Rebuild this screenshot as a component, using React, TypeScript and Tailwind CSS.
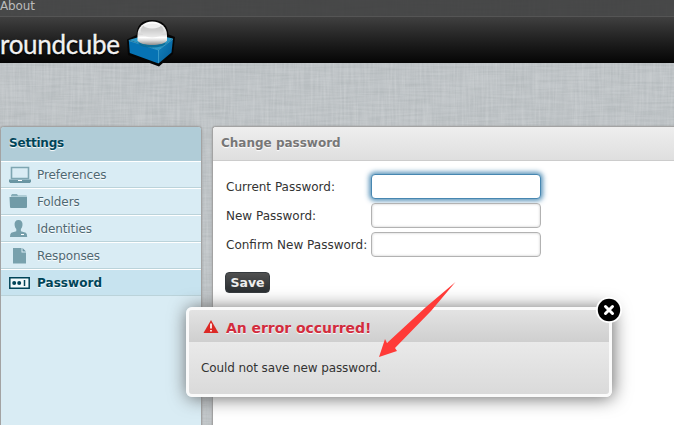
import React from "react";

type Item = { label: string; icon: React.ReactNode; active?: boolean };

const items: Item[] = [
  {
    label: "Preferences",
    icon: (
      <svg width="22" height="18" viewBox="0 0 22 18">
        <path d="M2.5 1.5h17v11h-17z" fill="#d9ecf4" stroke="#7ea6b2" strokeWidth="1.6" />
        <path d="M0 13.5h22v2l-1 1.5H1l-1-1.5z" fill="#6a96a3" />
        <path d="M9 14h4v1H9z" fill="#fff" />
      </svg>
    ),
  },
  {
    label: "Folders",
    icon: (
      <svg width="22" height="18" viewBox="0 0 22 18">
        <path d="M2 2.500L3 1h5l1 1.500h8q1 0 1 1H2z" fill="#86adb8" />
        <path d="M.5 4H18V14q0 1-1 1H2q-1 0-1-1z" fill="#719ba7" />
      </svg>
    ),
  },
  {
    label: "Identities",
    icon: (
      <svg width="22" height="18" viewBox="0 0 22 18">
        <path d="M9.500 0c3 0 4.300 2 4 5-.2 2-.8 3.200-1.600 4v2.200l5 1.500q1.300.8 1.300 4.300H1q0-3.500 1.300-4.300l5-1.500V9c-.8-.8-1.500-2-1.700-4-.3-3 1-5 3.900-5z" fill="#769fab" />
        <path d="M12 14.500h3" stroke="#fff" />
      </svg>
    ),
  },
  {
    label: "Responses",
    icon: (
      <svg width="22" height="18" viewBox="0 0 22 18">
        <path d="M4 1h8.500v4.500H17V16.500H4z" fill="#78a1ad" />
        <path d="M13.500 1L17 4.500h-3.500z" fill="#6b96a3" />
      </svg>
    ),
  },
  {
    label: "Password",
    active: true,
    icon: (
      <svg width="22" height="18" viewBox="0 0 22 18">
        <path d="M.8 3.700h19.400v10.600H.8z" fill="#f2fafc" stroke="#004458" strokeWidth="1.500" />
        <circle cx="5.200" cy="9" r="2" fill="#004458" />
        <circle cx="10.200" cy="9" r="2" fill="#004458" />
        <path d="M15.500 6v6" stroke="#004458" strokeWidth="1.500" />
      </svg>
    ),
  },
];

const fields = ["Current Password:", "New Password:", "Confirm New Password:"];

function Linen() {
  return (
    <svg width="674" height="425" className="absolute inset-0">
      <filter id="weft" x="0" y="0" width="100%" height="100%" colorInterpolationFilters="sRGB">
        <feTurbulence type="fractalNoise" baseFrequency=".03 .45" numOctaves="2" seed="4" />
        <feColorMatrix values="0 0 0 0 .25  0 0 0 0 .3  0 0 0 0 .3  1.2 0 0 0 -.4" />
      </filter>
      <filter id="warp" x="0" y="0" width="100%" height="100%" colorInterpolationFilters="sRGB">
        <feTurbulence type="fractalNoise" baseFrequency=".45 .03" numOctaves="2" seed="9" />
        <feColorMatrix values="0 0 0 0 1  0 0 0 0 1  0 0 0 0 1  1.2 0 0 0 -.4" />
      </filter>
      <rect width="674" height="425" filter="url(#weft)" opacity=".13" />
      <rect width="674" height="425" filter="url(#warp)" opacity=".24" />
      <rect width="674" height="16" fill="#333" opacity=".86" />
    </svg>
  );
}

function CubeLogo() {
  return (
    <svg width="52" height="48" viewBox="0 0 52 48" className="block">
      <defs>
        <linearGradient id="ball" x1="0" y1="0" x2="0" y2="1">
          <stop offset="0" stopColor="#fff" />
          <stop offset=".55" stopColor="#d8d8d8" />
          <stop offset=".68" stopColor="#fff" />
          <stop offset=".8" stopColor="#ddd" />
          <stop offset="1" stopColor="#8c8c8c" />
        </linearGradient>
        <linearGradient id="bowl" x1="0" y1="0" x2="0" y2="1">
          <stop offset="0" stopColor="#c5c5c5" />
          <stop offset=".5" stopColor="#d0d0d0" />
          <stop offset="1" stopColor="#ececec" />
        </linearGradient>
        <linearGradient id="side" x1="0" y1="0" x2="1" y2="1">
          <stop offset="0" stopColor="#1683bd" />
          <stop offset="1" stopColor="#005b98" />
        </linearGradient>
      </defs>
      <path d="M0 19.500L9.500 15Q10 0 25 0Q40 0 41.500 14.500L48 17L46 34L32 46.500L1 35Z" fill="#050505" />
      <path d="M1.800 20L12 17H39L46 18.500L31.500 30Z" fill="#2b97c6" />
      <path d="M1.800 20.500L31.500 30V43.500L2.800 33Z" fill="#0673b4" />
      <path d="M31.500 30L46 19L44.500 32.500L31.500 43.500Z" fill="url(#side)" />
      <path d="M1.800 20.500L31.500 30L46 19M31.500 30V43" stroke="#45abd8" strokeWidth=".8" fill="none" />
      <ellipse cx="25" cy="23" rx="13.500" ry="4.500" fill="#066790" opacity=".8" />
      <path d="M10.500 15C10.500 7 17 1.500 25.200 1.500S40 7 40 15v5.500c-3 6-26.500 6-29.500 0z" fill="url(#ball)" />
      <ellipse cx="25.200" cy="10.500" rx="11.500" ry="7" fill="url(#bowl)" />
      <ellipse cx="25.200" cy="5.500" rx="8.500" ry="3" fill="#fff" opacity=".7" />
    </svg>
  );
}

export default function App() {
  return (
    <div className="relative h-[425px] w-[674px] overflow-hidden bg-[#bfc4c7] text-[12px] text-[#333] [font-family:'DejaVu_Sans',Verdana,sans-serif]">
      <Linen />
      <div className="relative h-4 leading-[12px] tracking-[-0.150px] text-[#bbb]">About</div>
      <header className="relative flex h-[47px] items-start border-t border-[#555] bg-linear-to-b from-[#404040] to-[#060606]">
        <div className="w-[127px] whitespace-nowrap pt-[12px] text-[26px] leading-[30px] tracking-[-0.300px] text-[#f2f2f2] [-webkit-text-stroke:0.300px_#f2f2f2] [font-family:Lato,sans-serif] [text-shadow:0_2px_2px_#000]">
          roundcube
        </div>
        <div className="pt-[3px]">
          <CubeLogo />
        </div>
      </header>
      <main className="relative flex gap-[10px] pt-[63px]">
        <aside className="h-[320px] w-[202px] shrink-0 overflow-hidden rounded-t-[4px] border border-[#a3a3a3] bg-[#d9ecf4] shadow-[0_0_2px_#999]">
          <h2 className="h-[34px] bg-[#b0ccd7] pl-2 text-[12px] font-bold leading-[33px] tracking-[-0.200px] text-[#004458] [text-shadow:0_1px_1px_#fff]">
            Settings
          </h2>
          <ul>
            {items.map((item) => (
              <li
                key={item.label}
                className={
                  "flex h-[27px] items-center border-t border-b border-t-white border-b-[#bbd3da] pl-2 [text-shadow:0_1px_1px_#fff] " +
                  (item.active
                    ? "bg-[#c7e3ef] font-bold tracking-[0.050px] text-[#004458]"
                    : "tracking-[-0.100px] text-[#4f6872]")
                }
              >
                <span className="w-7">{item.icon}</span>
                <span>{item.label}</span>
              </li>
            ))}
          </ul>
        </aside>
        <section className="h-[320px] flex-1 overflow-hidden rounded-tl-[4px] border border-r-0 border-[#a3a3a3] bg-white shadow-[0_0_2px_#999]">
          <h2 className="h-[34px] border-b border-[#ccc] bg-linear-to-b from-[#eee] to-[#dfdfdf] pl-2 text-[12px] font-bold leading-[33px] text-[#777] [text-shadow:0_1px_1px_#fff]">
            Change password
          </h2>
          <form className="pl-[13px] pt-[13px]">
            <div className="flex flex-col gap-1">
              {fields.map((field, i) => (
                <label key={field} className="flex h-[25px] items-center">
                  <span className="w-[145px] whitespace-nowrap">{field}</span>
                  <input
                    type="password"
                    className={
                      "h-[25px] w-[170px] rounded-[4px] border bg-white outline-none " +
                      (i === 0
                        ? "border-[#4787b1] shadow-[0_0_5px_2px_rgba(71,135,177,.9)]"
                        : "border-[#b2b2b2] shadow-[inset_0_0_2px_1px_rgba(0,0,0,.1)]")
                    }
                  />
                </label>
              ))}
            </div>
            <button
              type="button"
              className="-ml-px mt-[15px] block h-[21px] w-[45px] rounded-[4px] border border-[#353a3e] bg-linear-to-b from-[#505050] to-[#2a2e31] text-[12.500px] font-bold leading-[18px] text-[#ededed]"
            >
              Save
            </button>
          </form>
        </section>
      </main>
      <div className="absolute left-[186px] top-[307px] h-[90px] w-[426px] rounded-[6px] border-[3px] border-[#fafafa] bg-linear-to-b from-[#f3f3f3] to-[#dadada] shadow-[1px_1px_18px_#666]">
        <div className="flex h-8 items-center rounded-tl-[3px] bg-linear-to-b from-[#e3e3e3] to-[#cfcfcf] pl-[14px]">
          <svg width="16" height="15" viewBox="0 0 16 15">
            <path d="M8 1L15.500 14H.5Z" fill="#dc2925" />
            <path d="M8 4.500v5M8 11v1.600" stroke="#fff" strokeWidth="1.700" />
          </svg>
          <h3 className="pl-[7px] pt-[4px] text-[14px] font-bold leading-5 tracking-[-0.050px] text-[#d22c3d] [text-shadow:0_1px_1px_#fff]">
            An error occurred!
          </h3>
        </div>
        <p className="pl-3 pt-[18px] leading-[16px] tracking-[-0.100px]">Could not save new password.</p>
        <svg width="26" height="26" viewBox="0 0 26 26" className="absolute -right-[13px] -top-[13px]">
          <circle cx="13" cy="13" r="13" fill="#fff" />
          <circle cx="13" cy="13" r="11.200" fill="#000" />
          <path d="M9.500 9.500l7 7M16.500 9.500l-7 7" stroke="#fff" strokeWidth="3" strokeLinecap="round" />
        </svg>
      </div>
      <svg width="80" height="80" viewBox="0 0 80 80" className="absolute left-[377px] top-[280px]">
        <path d="M78.500 2L49 27L10 63L8 59L2 77L20 71L18 68L54 31Z" fill="#ff3b38" />
      </svg>
    </div>
  );
}
